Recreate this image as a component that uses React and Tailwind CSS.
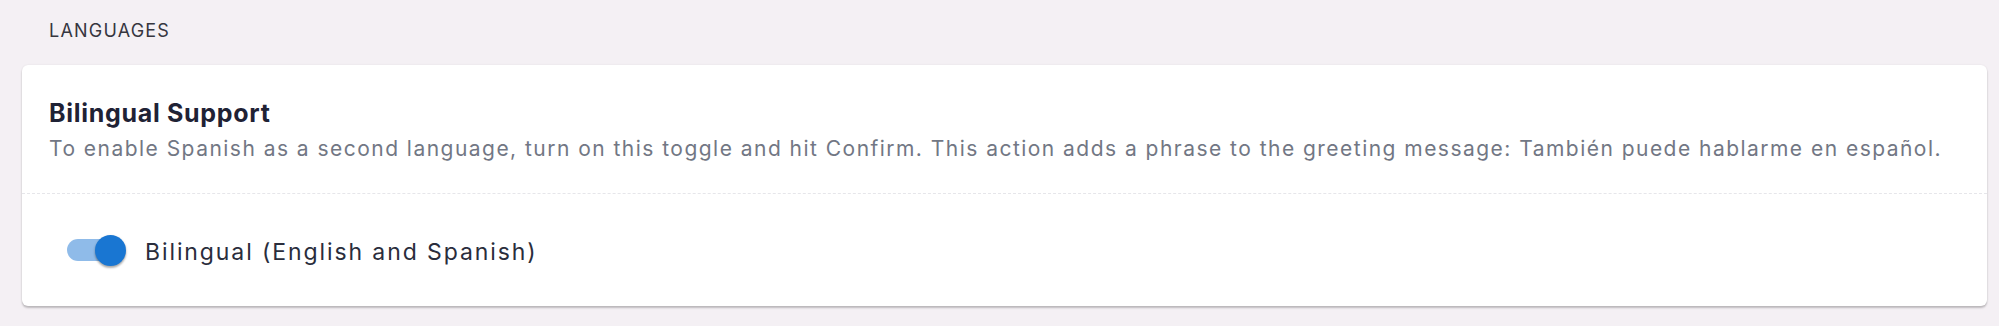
import React from "react";

export default function App() {
  return (
    <div
      className="min-h-[326px] w-full bg-[#f4f0f4] pt-[19px] pl-[22px] pr-[12px] pb-[19px]"
      style={{ fontFamily: "Inter, 'Open Sans', sans-serif" }}
    >
      <div className="pl-[27px] text-[18px] leading-6 uppercase tracking-[1.2px] text-[#36363f]">
        Languages
      </div>
      <div className="mt-[22px] rounded-[6px] bg-white shadow-[0_2px_2px_rgba(0,0,0,0.22),0_0_2px_rgba(0,0,0,0.08)]">
        <div className="px-[27px] pt-[32px] pb-[30px]">
          <div className="text-[25px] leading-8 font-bold tracking-[0.7px] text-[#1f2235]">
            Bilingual Support
          </div>
          <div className="mt-[6px] text-[21px] leading-7 tracking-[1.47px] text-[#727784]">
            To enable Spanish as a second language, turn on this toggle and hit Confirm. This action adds a phrase to the greeting message: También puede hablarme en español.
          </div>
        </div>
        <div className="border-t border-dashed border-[#e6e6ea]" />
        <div className="flex h-[112px] items-center pl-[45px]">
          <div className="relative h-[31px] w-[59px] shrink-0">
            <div className="absolute left-0 top-[4.5px] h-[22px] w-[53px] rounded-full bg-[#8fbbe9]" />
            <div className="absolute left-[28px] top-0 h-[31px] w-[31px] rounded-full bg-[#1976d2] shadow-[0_2px_2px_rgba(0,0,0,0.25),0_1px_3px_rgba(0,0,0,0.15)]" />
          </div>
          <span className="ml-[19px] pt-[4px] text-[23px] leading-7 tracking-[1.9px] text-[#2a2d3c]">
            Bilingual (English and Spanish)
          </span>
        </div>
      </div>
    </div>
  );
}
